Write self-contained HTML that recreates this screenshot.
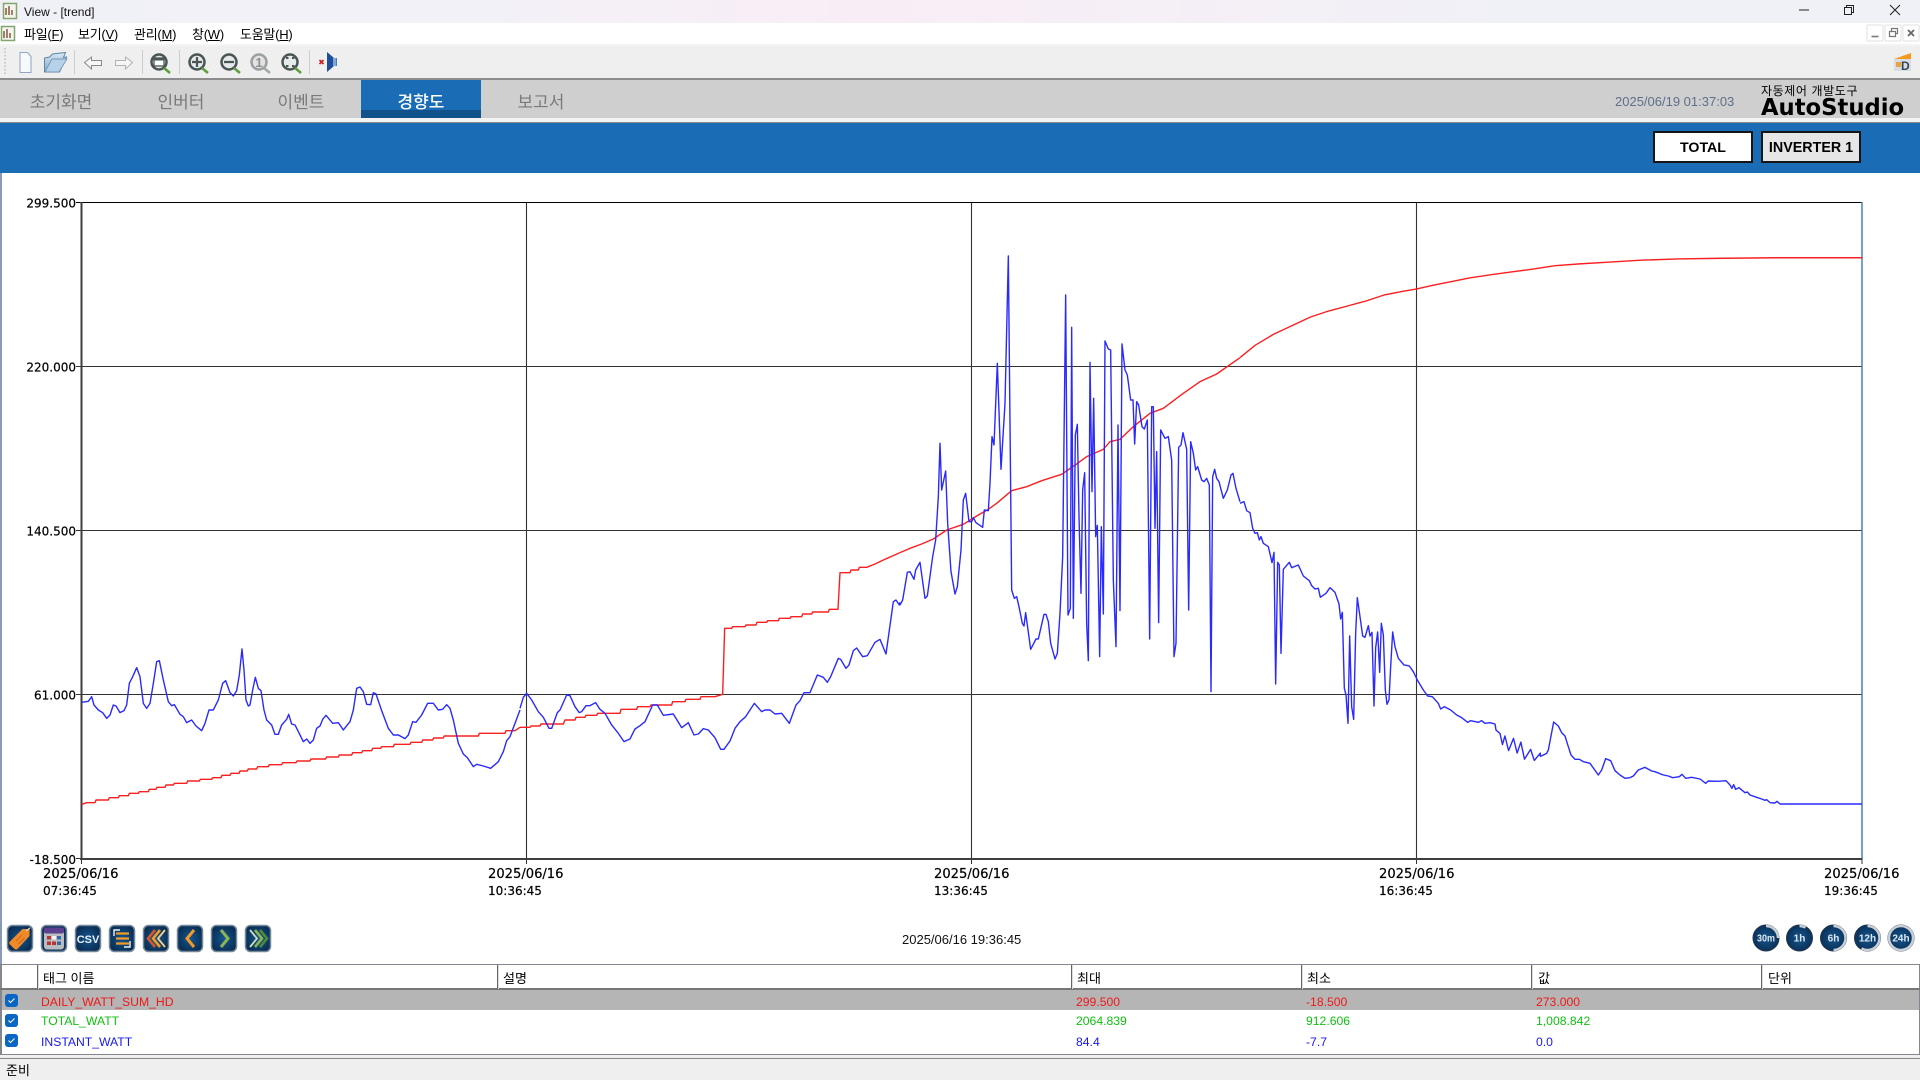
<!DOCTYPE html>
<html lang="ko"><head><meta charset="utf-8"><title>View - [trend]</title>
<style>
html,body{margin:0;padding:0;width:1920px;height:1080px;overflow:hidden;background:#fff;font-family:"Liberation Sans","Noto Sans CJK KR",sans-serif;color:#000}
.a{position:absolute;white-space:nowrap}
.r{line-height:20px;height:20px;font-size:12.2px}
.h{font-size:13px;line-height:23px;top:966px;font-family:"Noto Sans CJK KR",sans-serif}
.m{font-size:13px;line-height:21px;top:24px;letter-spacing:-.25px;font-family:"Liberation Sans","Noto Sans CJK KR",sans-serif}
.t{font-size:17px;line-height:38px;top:82px;width:120px;text-align:center;color:#7a7a7a;font-family:"Noto Sans CJK KR",sans-serif}
.sep{position:absolute;top:965px;height:24px;width:2px;background:linear-gradient(to right,#666 50%,#ddd 50%)}
.cb{position:absolute;left:5px;width:13px;height:13px;border-radius:3px;background:#0a66c2}
</style></head><body>
<div class="a" style="left:0;top:0;width:1920px;height:23px;background:linear-gradient(to right,#f0f1f7 0%,#f2f1f7 25%,#f9edf5 45%,#f5eff6 60%,#f0f1f7 80%,#f0f1f7 100%)"></div>
<div class="a" style="left:24px;top:3px;font-size:12px;line-height:19px;color:#111">View - [trend]</div>
<div class="a" style="left:0;top:23px;width:1920px;height:21px;background:#fff"></div>
<div class="a m" style="left:24px">파일(<u>F</u>)</div>
<div class="a m" style="left:78px">보기(<u>V</u>)</div>
<div class="a m" style="left:134px">관리(<u>M</u>)</div>
<div class="a m" style="left:192px">창(<u>W</u>)</div>
<div class="a m" style="left:240px">도움말(<u>H</u>)</div>
<div class="a" style="left:0;top:44px;width:1920px;height:2px;background:#f4f4f4"></div>
<div class="a" style="left:0;top:46px;width:1920px;height:32px;background:#efefef"></div>
<div class="a" style="left:0;top:78px;width:1920px;height:2px;background:#8c8c8c"></div>
<div class="a" style="left:0;top:80px;width:1920px;height:38px;background:#cfcfcf"></div>
<div class="a" style="left:361px;top:80px;width:120px;height:30px;background:#1a6db5"></div>
<div class="a" style="left:361px;top:110px;width:120px;height:8px;background:#12528a"></div>
<div class="a t" style="left:1px">초기화면</div>
<div class="a t" style="left:121px">인버터</div>
<div class="a t" style="left:241px">이벤트</div>
<div class="a t" style="left:361px;color:#fff;font-weight:500">경향도</div>
<div class="a t" style="left:481px">보고서</div>
<div class="a" style="left:1615px;top:93px;font-size:13px;line-height:18px;color:#5d7089">2025/06/19 01:37:03</div>
<div class="a" style="left:1761px;top:82px;font-size:12px;line-height:18px;letter-spacing:.6px;font-family:'Noto Sans CJK KR',sans-serif">자동제어 개발도구</div>
<div class="a" style="left:1761px;top:95px;font-size:22.7px;line-height:27px;font-weight:bold;font-family:'DejaVu Sans',sans-serif">AutoStudio</div>
<div class="a" style="left:0;top:118px;width:1920px;height:4px;background:#f3f3f3"></div>
<div class="a" style="left:0;top:122px;width:1920px;height:1px;background:#8c8c8c"></div>
<div class="a" style="left:0;top:123px;width:1920px;height:50px;background:#1a6db5"></div>
<div class="a" style="left:0;top:173px;width:1.5px;height:791px;background:#8a9ab2"></div>
<div class="a" style="left:1653px;top:131px;width:96px;height:28px;border:2px solid #151515;background:#fff;font-weight:bold;font-size:14.2px;line-height:30px;text-align:center">TOTAL</div>
<div class="a" style="left:1761px;top:131px;width:96px;height:28px;border:2px solid #151515;background:#e6e6e6;font-weight:bold;font-size:14.3px;line-height:30px;text-align:center">INVERTER 1</div>

<svg class="a" style="left:0;top:0" width="1920" height="1080" viewBox="0 0 1920 1080" xmlns="http://www.w3.org/2000/svg">
<defs>
<radialGradient id="nv" cx=".5" cy=".5" r=".6"><stop offset="0" stop-color="#14568f"/><stop offset="1" stop-color="#082a4e"/></radialGradient>
<linearGradient id="fd" x1="0" y1="0" x2="0" y2="1"><stop offset="0" stop-color="#dce9f5"/><stop offset="1" stop-color="#7fa6c9"/></linearGradient>
</defs>
<!-- app icons -->
<g><rect x="3.500" y="3.500" width="13" height="15" fill="#f4f4f0" stroke="#84a56c" stroke-width="1.500"/><path d="M6 15V8M9 15V6M12 15v-5" stroke="#8a5a3a" stroke-width="1.500"/><rect x="1.500" y="26.500" width="13" height="14" fill="#f4f4f0" stroke="#84a56c" stroke-width="1.500"/><path d="M4 38v-7M7 38v-9M10 38v-5" stroke="#8a5a3a" stroke-width="1.500"/></g>
<!-- window controls -->
<path d="M1799 10h10M1890 5l10 10M1900 5l-10 10" stroke="#222" stroke-width="1" fill="none"/>
<path d="M1844.500 7.500h7v7h-7zM1846.500 7.500v-2h7v7h-2" stroke="#222" stroke-width="1" fill="none"/>
<g fill="#fff" stroke="#e2e2e2"><rect x="1867" y="25" width="16" height="16" rx="1"/><rect x="1885" y="25" width="16" height="16" rx="1"/><rect x="1903" y="25" width="16" height="16" rx="1"/></g>
<path d="M1871.500 36.500h7" stroke="#777" stroke-width="1.600"/>
<path d="M1889.500 31.500h6v5h-6zM1891.500 31v-2.500h6v5h-2" stroke="#777" stroke-width="1.200" fill="none"/>
<path d="M1908 30l6 6M1914 30l-6 6" stroke="#666" stroke-width="1.800"/>
<!-- 3D icon -->
<path d="M1894 59l17-6v8h-17z" fill="#f29a1e"/><rect x="1894" y="59" width="17" height="12" fill="#d8dde2"/><rect x="1896" y="62" width="5" height="5" fill="#e9a33a"/><text x="1901" y="70" font-family="Liberation Sans" font-size="12" font-weight="bold" fill="#36465a">D</text>
<!-- toolbar -->
<path d="M5 48v28" stroke="#bbb" stroke-width="1.500" stroke-dasharray="1.500 2"/>
<g stroke="#cdcdcd"><path d="M74.500 50v24M142.500 50v24M179.500 50v24M309.500 50v24"/></g>
<path d="M20 52.500h7.500l3.500 4v16h-11z" fill="#f6fafe" stroke="#8ea6bf"/>
<path d="M44.500 72V58l5-1 3-3 13-1.500-2 5 3-.5-7 15z" fill="url(#fd)" stroke="#5f86a8"/>
<path d="M45 72l7-13h15l-8 13z" fill="#b7d2e8" stroke="#5f86a8" stroke-width=".7"/>
<path d="M84.500 62.500l7-5.500v3.500h10v5h-10v3.500z" fill="#f6f6f6" stroke="#8a8a8a"/>
<path d="M132.500 62.500l-7-5.500v3.500h-10v5h10v3.500z" fill="#f6f6f6" stroke="#b2b2b2"/>
<g id="mags" fill="#e6eaea" stroke="#4a5555" stroke-width="2.500">
<circle cx="159" cy="62" r="7.500"/><circle cx="197" cy="62" r="7.500"/><circle cx="229" cy="62" r="7.500"/><circle cx="259" cy="62" r="7.500" stroke="#9a9f9f" fill="#e3e3e3"/><circle cx="290" cy="62" r="7.500"/>
</g>
<g stroke-width="2.500" fill="none"><path d="M164 68l6 5M202 68l6 5M234 68l6 5M295 68l6 5" stroke="#5e9c3c"/><path d="M264 68l6 5" stroke="#a4a8a4"/></g>
<rect x="154" y="58" width="10" height="8" fill="#fff" stroke="#4a5555" stroke-width="1.300"/><path d="M154 59.500h10" stroke="#4a5555" stroke-width="2"/>
<path d="M192 62h10M197 57v10M224 62h10" stroke="#4a5555" stroke-width="2.200"/>
<text x="259" y="67" text-anchor="middle" font-family="Liberation Sans" font-size="13" font-weight="bold" fill="#8f8f8f">1</text>
<path d="M286 58h2.500M292 58h2.500M286 66h2.500M292 66h2.500" stroke="#4a5555" stroke-width="2"/>
<path d="M319.500 60l4 4M323.500 60l-4 4" stroke="#c22" stroke-width="1.800"/>
<path d="M327 52v20l7-6h3v-8h-3z" fill="#1f4f9a"/>
<rect x="333" y="58" width="3.500" height="8" fill="#7fa7d8"/>

<!-- chart grid -->
<g stroke="#333" stroke-width="1.100" fill="none">
<path d="M81 366.500H1862M81 530.500H1862M81 694.500H1862M526.500 202V859M971.500 202V859M1416.500 202V859"/>
</g>
<path d="M76 202.500H1862" stroke="#000" stroke-width="1"/>
<path d="M76 366.500h5M76 530.500h5M76 694.500h5M76 858.500h5M81.500 859v5M526.500 859v5M971.500 859v5M1416.500 859v5M1862 859v5" stroke="#333"/>
<path d="M1862 202V860" stroke="#4a7fc0" stroke-width="1.500"/>
<path d="M81.500 202V860M80 859H1862" stroke="#3e3e3e" stroke-width="2"/>

<!-- red trend -->
<g fill="none" stroke="#fa2020" stroke-width="1.400" stroke-linejoin="round">
<path transform="translate(60 620) scale(.33333)" vector-effect="non-scaling-stroke" d="M65 553L80 548H105L108 540H145L148 533H175L178 527H205L208 520H235L238 515H265L268 508H288L291 502H315L318 495H340L343 490H380L383 483H418L421 478H455L458 473H483L486 466H510L513 460H537L540 453H562L565 447H590L593 440H625L628 434H665L668 428H708L711 423H750L753 417H797L800 411H835L838 405H875L878 398H905L908 392H935L938 385H962L965 380H1000L1003 373H1050L1053 367H1085L1088 360H1118L1121 354H1150L1153 348H1255L1258 340H1335L1338 332H1365L1380 322"/>
<path transform="translate(500 560) scale(.33333)" vector-effect="non-scaling-stroke" d="M60 502H90L93 498H120L123 492H190L195 480H225L228 472H255L258 466H290L293 460H360L363 448H410L413 440H450L453 435H515L518 425H555L558 418H600L603 410H645L668 403L674 205H695L698 200H735L738 195H768L771 187H800L803 182H835L838 175H870L873 170H905L908 162H935L938 156H985L988 148H1014L1020 38H1050L1053 30H1075L1078 22H1100L1125 12L1150 0L1200 -22"/>
<polyline transform="translate(900 240) scale(.33333)" vector-effect="non-scaling-stroke" points="0,938 30,925 65,912 100,897 140,870 190,853 235,825 265,808 290,790 335,752 380,740 425,722 485,703 530,672 560,650 610,628 630,605 660,598 700,560 750,520 790,505 850,460 900,425 950,402 1020,353"/>
<polyline transform="scale(1.2245)" vector-effect="non-scaling-stroke" points="1012.700,292 1025,282 1040,273 1055,266 1070,259 1085,254 1100,250 1115,246 1130,241 1145,238 1157,236 1170,233 1185,230 1200,227 1220,224 1235,222 1250,220 1270,217 1290,215.500 1315,214 1340,212.500 1370,211.500 1400,211 1450,210.500 1521,210.500"/>
</g>
<!-- blue trend -->
<g fill="none" stroke="#2a2aff" stroke-width="1.400" stroke-linejoin="round">
<polyline transform="translate(60 620) scale(.33333)" vector-effect="non-scaling-stroke" points="65,247 85,244 95,230 102,255 115,270 128,278 140,295 150,285 160,255 168,258 180,278 192,272 200,255 208,190 218,170 230,143 240,170 250,250 260,265 270,250 280,190 290,125 298,122 310,180 325,245 335,257 343,254 360,283 370,290 380,308 395,300 408,318 425,332 435,310 447,270 460,270 475,240 488,190 497,182 510,218 520,228 530,212 538,165 546,87 552,150 558,240 565,258 570,255 578,210 586,172 595,205 603,212 612,270 620,300 635,315 645,343 655,343 665,315 680,298 686,283 695,312 705,315 720,345 730,365 740,357 750,370 760,360 770,325 780,318 788,298 798,286 818,310 835,308 850,330 870,305 880,270 890,205 900,201 910,215 920,253 932,254 940,218 948,222 965,272 985,325 1000,345 1015,345 1035,356 1045,345 1058,305 1068,307 1085,285 1103,250 1120,250 1135,270 1148,268 1160,254 1170,265 1180,300 1195,370 1210,402 1222,413 1240,440 1250,433 1270,438 1292,445 1315,425 1330,395 1340,362 1350,350 1365,310 1380,270"/>
<polyline transform="translate(500 560) scale(.33333)" vector-effect="non-scaling-stroke" points="60,445 70,412 80,400 95,420 115,455 130,472 147,505 155,505 172,458 180,450 200,405 210,407 225,440 238,458 245,455 258,437 270,437 287,428 300,448 315,460 335,495 355,520 372,545 390,537 405,507 420,497 435,485 458,435 472,435 490,466 520,462 545,503 565,488 582,525 595,522 610,506 625,510 645,533 662,568 672,568 690,543 705,505 720,485 737,470 763,430 785,455 795,450 810,450 825,462 845,460 868,490 888,435 900,422 912,398 930,398 952,345 970,352 982,367 992,350 1015,295 1022,298 1038,325 1047,315 1060,272 1070,264 1088,290 1102,287 1125,247 1140,238 1158,282 1180,125 1188,120 1198,135 1200,127"/>
<polyline transform="translate(900 240) scale(.33333)" vector-effect="non-scaling-stroke" points="0,1095 8,1080 22,997 30,995 42,1018 47,990 60,967 75,1075 82,1068 98,950 107,900 115,770 120,610 125,750 137,693 143,850 153,995 165,1062 172,1040 183,930 190,780 197,760 207,845 215,845 220,833 228,848 248,862 253,810 265,812 270,730 276,590 282,615 292,370 303,688 315,490 325,48 335,1050 343,1075 350,1070 357,1100 367,1150 372,1158 377,1118 392,1228 408,1197 415,1197 432,1123 438,1123 445,1145 452,1210 465,1257 472,1240 480,1120 488,950 497,165 504,1125 511,1105 515,262 520,1135 526,585 532,553 537,830 543,1060 548,750 554,698 560,1150 565,1262 570,367 576,755 581,475 587,890 592,856 599,1250 604,860 610,1122 615,303 625,327 632,330 640,1020 648,1220 654,555 660,1112 666,312 675,390 682,405 692,480 699,480 704,612 710,485 716,495 726,560 733,567 742,540 749,1197 755,500 760,500 765,865 770,635 776,1148 782,570 795,595 805,590 815,660 822,1250 828,1210 836,622 843,615 849,578 860,628 866,1110 872,605 880,640 887,690 893,680 905,720 912,725 920,715 928,735 933,1355 938,710 944,688 950,715 957,725 970,775 982,750 993,705 999,700 1008,745 1020,785"/>
<polyline transform="translate(1200 420) scale(.33333)" vector-effect="non-scaling-stroke" points="120,250 132,245 140,272 150,278 158,325 165,340 172,338 178,360 183,350 190,370 205,380 212,410 216,428 222,397 227,792 233,427 238,435 243,700 250,448 268,427 275,443 295,435 310,468 328,482 335,497 345,507 355,505 361,532 378,520 390,503 405,517 417,552 422,597 427,577 433,805 438,825 444,910 449,648 455,860 461,898 467,640 472,533 480,590 488,648 495,652 505,617 510,648 516,637 522,858 527,683 533,636 539,757 544,610 550,645 556,810 561,853 567,840 572,740 578,636 585,680 595,715 612,735 628,738 640,755 652,780 670,810 683,828 697,830 715,850 722,867 733,860 752,870 770,885 785,893 803,907 812,902 835,907 845,902 855,910 870,908 885,912 888,930"/>
<polyline transform="scale(1.2245)" vector-effect="non-scaling-stroke" points="1221.500,596 1225,599 1227,608 1229,601 1232,613 1236,603 1239,615 1242,606 1245,620 1250,612 1253,621 1258,615 1257.700,617.500"/>
<polyline transform="translate(1540 700) scale(.33333)" vector-effect="non-scaling-stroke" points="0,170 20,160 25,150 41,66 55,78 65,98 75,108 85,140 93,165 105,178 118,178 130,185 150,190 175,225 185,210 197,176 212,182 225,212 240,225 255,235 270,233 280,228 295,210 315,202 335,213 345,215 370,225 385,228 398,233 418,230 426,223 437,235 455,232 480,237 497,250 505,243 535,244 558,242 570,255 576,265 581,254 587,268 597,263 615,278 622,276 630,285 650,292 665,297 675,301 680,299 690,308 705,309 711,304 720,312 966,312"/>
</g>
<!-- axis labels -->
<g font-family="DejaVu Sans" font-size="12" fill="#000" text-anchor="end" stroke="#000" stroke-width=".2">
<text x="76" y="207.500">299.500</text><text x="76" y="371.500">220.000</text><text x="76" y="535.500">140.500</text><text x="76" y="699.500">61.000</text><text x="76" y="864">-18.500</text>
</g>
<g font-family="DejaVu Sans" font-size="13.100" fill="#000" stroke="#000" stroke-width=".2">
<text x="43" y="878">2025/06/16</text><text x="488" y="878">2025/06/16</text><text x="934" y="878">2025/06/16</text><text x="1379" y="878">2025/06/16</text><text x="1824" y="878">2025/06/16</text>
</g>
<g font-family="DejaVu Sans" font-size="12" fill="#000" stroke="#000" stroke-width=".2">
<text x="43" y="895">07:36:45</text><text x="488" y="895">10:36:45</text><text x="934" y="895">13:36:45</text><text x="1379" y="895">16:36:45</text><text x="1824" y="895">19:36:45</text>
</g>
<text x="902" y="944" font-family="Liberation Sans" font-size="13" fill="#111">2025/06/16 19:36:45</text>

<!-- bottom left buttons -->
<g fill="url(#nv)" stroke="#75879a" stroke-width="1.500">
<rect x="7.500" y="925.500" width="25" height="26" rx="5"/><rect x="41.500" y="925.500" width="25" height="26" rx="5"/><rect x="75.500" y="925.500" width="25" height="26" rx="5"/><rect x="109.500" y="925.500" width="25" height="26" rx="5"/><rect x="143.500" y="925.500" width="25" height="26" rx="5"/><rect x="177.500" y="925.500" width="25" height="26" rx="5"/><rect x="211.500" y="925.500" width="25" height="26" rx="5"/><rect x="245.500" y="925.500" width="25" height="26" rx="5"/>
</g>
<path d="M10.500 941l12-12h7v7l-12 13q-1.500 1-3 0l-5-5q-1-1.500 1-3z" fill="#f08a28"/>
<path d="M26 931l4-3" stroke="#d8d8d8" stroke-width="1.200"/>
<path d="M16 941l6-6M18.500 944l6-6" stroke="#c96a1a"/>
<rect x="44" y="927.500" width="20" height="22" rx="3" fill="#b9bdc0"/>
<rect x="44" y="927.500" width="20" height="6" rx="2" fill="#5c3f8f"/>
<g fill="#b8352f"><rect x="47" y="936" width="4" height="3.500"/><rect x="47" y="941.500" width="4" height="3.500"/></g>
<g fill="#f4f4f4"><rect x="52" y="936" width="4" height="3.500"/></g>
<g fill="#3267ad"><rect x="57" y="936" width="4" height="3.500"/><rect x="57" y="941.500" width="4" height="3.500"/></g>
<rect x="52" y="941.500" width="4" height="3.500" fill="#b8352f"/>
<text x="88" y="943" text-anchor="middle" font-family="Liberation Sans" font-size="11" font-weight="bold" fill="#e8eef4">CSV</text>
<path d="M114 936v-6h6M130 941v6h-6" stroke="#eef2f5" stroke-width="1.400" fill="none"/>
<path d="M116 933.500h13M116 938.500h13M116 943.500h13" stroke="#f09a28" stroke-width="2.200"/>
<path d="M155 930l-7 8.500 7 8.500" stroke="#d9552a" stroke-width="2.600" fill="none"/>
<path d="M160 930l-7 8.500 7 8.500" stroke="#f09a28" stroke-width="2.600" fill="none"/>
<path d="M165 930l-7 8.500 7 8.500" stroke="#f7d08c" stroke-width="1.800" fill="none"/>
<path d="M194 930l-7 8.500 7 8.500" stroke="#f09a28" stroke-width="3" fill="none"/>
<path d="M221 930l7 8.500-7 8.500" stroke="#8db356" stroke-width="3" fill="none"/>
<path d="M250 930l7 8.500-7 8.500" stroke="#cfe0b0" stroke-width="1.800" fill="none"/>
<path d="M255 930l7 8.500-7 8.500" stroke="#8db356" stroke-width="2.600" fill="none"/>
<path d="M260 930l7 8.500-7 8.500" stroke="#4e8a3a" stroke-width="2.600" fill="none"/>

<!-- time buttons -->
<g fill="url(#nv)" stroke="#24384d" stroke-width="1"><circle cx="1766" cy="938" r="13"/><circle cx="1799.500" cy="938" r="13"/><circle cx="1833.500" cy="938" r="13"/><circle cx="1867.500" cy="938" r="13"/><circle cx="1901" cy="938" r="13"/></g>
<g fill="none" stroke="#c9cfd4" stroke-width="2.500">
<path d="M1766 926a12 12 0 0 1 12 12"/>
<path d="M1799.500 926a12 12 0 0 1 6 1.600"/>
<path d="M1833.500 926a12 12 0 0 1 0 24"/>
<path d="M1867.500 926a12 12 0 0 1 0 24a12 12 0 0 1-6-1.600"/>
<circle cx="1901" cy="938" r="12"/>
</g>
<g font-family="Liberation Sans" font-size="10" font-weight="bold" fill="#dfe7ee" text-anchor="middle">
<text x="1766" y="941.500" textLength="18" lengthAdjust="spacingAndGlyphs">30m</text><text x="1799.500" y="941.500">1h</text><text x="1833.500" y="941.500">6h</text><text x="1867.500" y="941.500">12h</text><text x="1901" y="941.500">24h</text>
</g>
</svg>

<!-- table -->
<div class="a" style="left:0;top:964px;width:1920px;height:1px;background:#84888e"></div>
<div class="a" style="left:0;top:964px;width:1.5px;height:95px;background:#84888e"></div>
<div class="a" style="left:1918.5px;top:964px;width:1.5px;height:95px;background:#84888e"></div>
<div class="a" style="left:0;top:988px;width:1920px;height:2px;background:#777"></div>
<div class="sep" style="left:37px"></div>
<div class="sep" style="left:497px"></div>
<div class="sep" style="left:1071px"></div>
<div class="sep" style="left:1301px"></div>
<div class="sep" style="left:1531px"></div>
<div class="sep" style="left:1761px"></div>
<div class="a h" style="left:43px">태그 이름</div>
<div class="a h" style="left:503px">설명</div>
<div class="a h" style="left:1077px">최대</div>
<div class="a h" style="left:1307px">최소</div>
<div class="a h" style="left:1538px">값</div>
<div class="a h" style="left:1768px">단위</div>
<div class="a" style="left:2px;top:990px;width:1917px;height:20px;background:#b5b5b5"></div>
<div class="cb" style="top:994px"><svg width="13" height="13" viewBox="0 0 13 13" style="display:block"><path d="M3.500 6.500l2 2 4-4" stroke="#fff" fill="none"/></svg></div>
<div class="cb" style="top:1014px"><svg width="13" height="13" viewBox="0 0 13 13" style="display:block"><path d="M3.500 6.500l2 2 4-4" stroke="#fff" fill="none"/></svg></div>
<div class="cb" style="top:1034px"><svg width="13" height="13" viewBox="0 0 13 13" style="display:block"><path d="M3.500 6.500l2 2 4-4" stroke="#fff" fill="none"/></svg></div>
<div class="a r" style="left:41px;top:992px;color:#f01818">DAILY_WATT_SUM_HD</div>
<div class="a r" style="left:1076px;top:992px;color:#f01818">299.500</div>
<div class="a r" style="left:1306px;top:992px;color:#f01818">-18.500</div>
<div class="a r" style="left:1536px;top:992px;color:#f01818">273.000</div>
<div class="a r" style="left:41px;top:1011px;color:#10c010">TOTAL_WATT</div>
<div class="a r" style="left:1076px;top:1011px;color:#10c010">2064.839</div>
<div class="a r" style="left:1306px;top:1011px;color:#10c010">912.606</div>
<div class="a r" style="left:1536px;top:1011px;color:#10c010">1,008.842</div>
<div class="a r" style="left:41px;top:1032px;color:#1818f0">INSTANT_WATT</div>
<div class="a r" style="left:1076px;top:1032px;color:#1818f0">84.4</div>
<div class="a r" style="left:1306px;top:1032px;color:#1818f0">-7.7</div>
<div class="a r" style="left:1536px;top:1032px;color:#1818f0">0.0</div>
<div class="a" style="left:0;top:1054px;width:1920px;height:1px;background:#84888e"></div>
<div class="a" style="left:0;top:1055px;width:1920px;height:3px;background:#efefef"></div>
<div class="a" style="left:0;top:1058px;width:1920px;height:1px;background:#84888e"></div>
<div class="a" style="left:0;top:1059px;width:1920px;height:21px;background:#efefef"></div>
<div class="a" style="left:6px;top:1060px;font-size:13px;line-height:20px;font-family:'Noto Sans CJK KR',sans-serif">준비</div>
</body></html>
